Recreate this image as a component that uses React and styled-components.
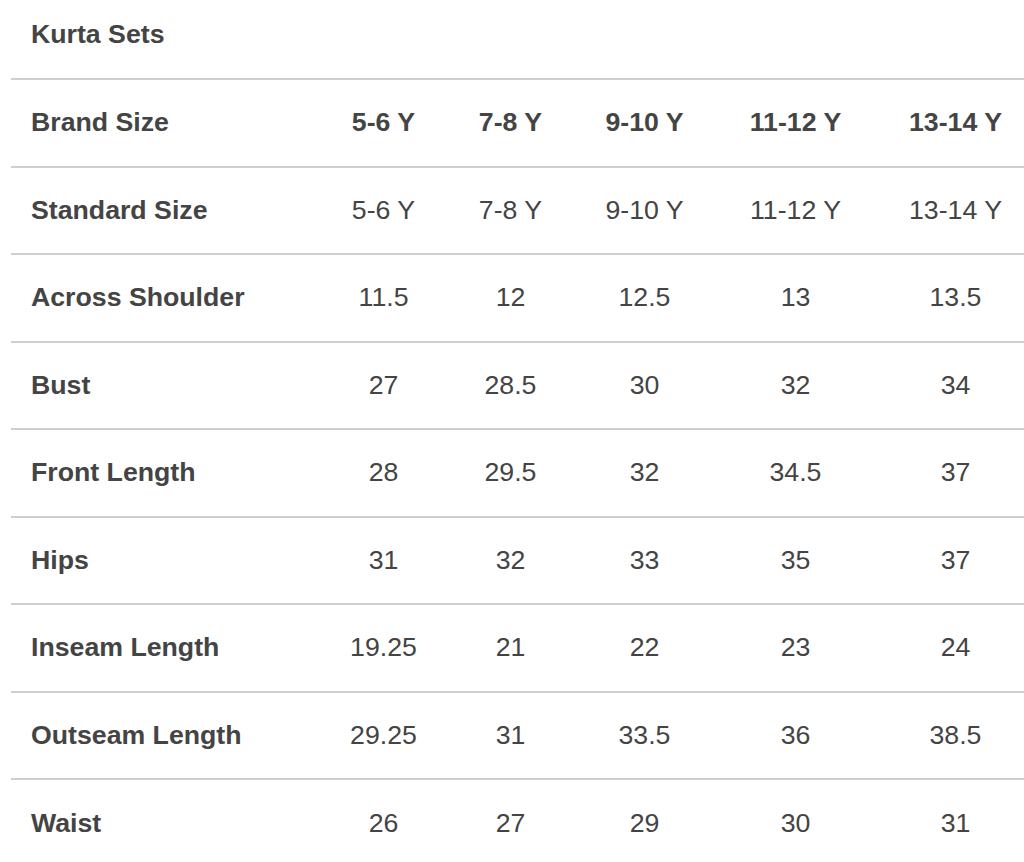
import React from "react";
import styled, { createGlobalStyle } from "styled-components";

const GlobalStyle = createGlobalStyle`
  html, body {
    margin: 0;
    padding: 0;
    background: #ffffff;
    overflow: hidden;
  }
  body {
    font-family: "Liberation Sans", Arial, sans-serif;
    color: #444444;
  }
`;

const sizes = ["5-6 Y", "7-8 Y", "9-10 Y", "11-12 Y", "13-14 Y"];

const rows = [
  { label: "Standard Size", values: sizes },
  { label: "Across Shoulder", values: ["11.5", "12", "12.5", "13", "13.5"] },
  { label: "Bust", values: ["27", "28.5", "30", "32", "34"] },
  { label: "Front Length", values: ["28", "29.5", "32", "34.5", "37"] },
  { label: "Hips", values: ["31", "32", "33", "35", "37"] },
  { label: "Inseam Length", values: ["19.25", "21", "22", "23", "24"] },
  { label: "Outseam Length", values: ["29.25", "31", "33.5", "36", "38.5"] },
  { label: "Waist", values: ["26", "27", "29", "30", "31"] },
];

const SizeChart = () => {
  return (
    <>
      <GlobalStyle />
      <Wrapper>
        <Title>Kurta Sets</Title>
        <Row>
          <Label>Brand Size</Label>
          {sizes.map((s) => (
            <Cell key={s} bold>
              {s}
            </Cell>
          ))}
        </Row>
        {rows.map((row, i) => (
          <Row key={row.label} last={i === rows.length - 1}>
            <Label>{row.label}</Label>
            {row.values.map((v, j) => (
              <Cell key={j}>{v}</Cell>
            ))}
          </Row>
        ))}
      </Wrapper>
    </>
  );
};

const Wrapper = styled.div`
  margin-left: 11px;
  width: 1025px;
`;

const Title = styled.div`
  box-sizing: border-box;
  height: 80px;
  display: flex;
  align-items: center;
  padding: 0 0 10px 20px;
  font-size: 26.7px;
  font-weight: bold;
  border-bottom: 2px solid #cfcfcf;
`;

const Row = styled.div`
  box-sizing: border-box;
  display: grid;
  grid-template-columns: 309px 127px 127px 141px 161px 159px;
  align-items: center;
  height: 87.5px;
  border-bottom: ${(p) => (p.last ? "none" : "2px solid #cfcfcf")};
  font-size: 26.7px;
`;

const Label = styled.div`
  padding-left: 20px;
  font-weight: bold;
`;

const Cell = styled.div`
  text-align: center;
  font-weight: ${(p) => (p.bold ? "bold" : "normal")};
`;

export default SizeChart;
